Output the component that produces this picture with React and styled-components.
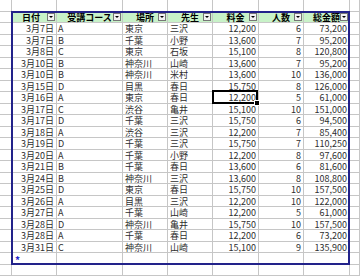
import styled, { createGlobalStyle } from "styled-components";

const GlobalStyle = createGlobalStyle`
  html, body {
    margin: 0;
    padding: 0;
    background: #ffffff;
  }
  body {
    font-family: "Noto Sans CJK JP", "Noto Sans", sans-serif;
  }
`;

const GRID = "#c6c6c6";
const WIDTHS = [12, 45, 66, 45, 45, 46, 45, 46];

const Sheet = styled.div`
  position: relative;
  width: 360px;
  height: 276px;
  overflow: hidden;
  display: grid;
  grid-template-columns: ${WIDTHS.map((w) => w + "px").join(" ")} 1fr;
  grid-template-rows: 12px repeat(11, 11px 12px) 1fr;
  background: #ffffff;
`;

const Cell = styled.div`
  position: relative;
  box-sizing: border-box;
  border-right: 1px solid ${GRID};
  border-bottom: 1px solid ${GRID};
  display: flex;
  align-items: center;
  justify-content: ${(p) => (p.$align === "right" ? "flex-end" : "flex-start")};
  padding: 0 ${(p) => (p.$align === "right" ? "2px" : "0")} 0 ${(p) => p.$pad || 0}px;
  font-size: 9px;
  line-height: 1;
  color: #2e2e2e;
  white-space: nowrap;
  overflow: visible;

  ${(p) =>
    p.$active &&
    `
    &::before {
      content: "";
      position: absolute;
      top: -2px;
      left: -1px;
      right: 0;
      bottom: -1px;
      border: 2px solid #000;
      z-index: 3;
    }
    &::after {
      content: "";
      position: absolute;
      right: -2px;
      bottom: -3px;
      width: 4px;
      height: 4px;
      background: #000;
      border: 1px solid #fff;
      z-index: 4;
    }
  `}
`;

const HeadCell = styled(Cell)`
  background: #c8f2c8;
  justify-content: center;
  font-weight: bold;
  color: #000;
  padding: 0 ${(p) => p.$shift || 0}px 0 0;
`;

const DropButton = styled.span`
  position: absolute;
  right: 1px;
  top: 1px;
  width: 8px;
  height: 8px;
  box-sizing: border-box;
  background: #f2f2f2;
  border: 1px solid #767676;
  display: flex;
  align-items: center;
  justify-content: center;

  &::after {
    content: "";
    border-left: 2px solid transparent;
    border-right: 2px solid transparent;
    border-top: 2px solid #000;
  }
`;

const NewMark = styled.span`
  color: #2222cc;
  font-size: 10px;
  font-weight: bold;
  margin-top: 2px;
`;

const ListFrame = styled.div`
  position: absolute;
  grid-row: 2 / 24;
  grid-column: 2 / 9;
  top: -1px;
  left: -1px;
  right: 0;
  bottom: 0;
  border: 2px solid #22228a;
  pointer-events: none;
  z-index: 2;
`;

const headers = [
  { label: "日付", shift: 6 },
  { label: "受講コース", shift: 0 },
  { label: "場所", shift: 0 },
  { label: "先生", shift: 0 },
  { label: "料金", shift: 0 },
  { label: "人数", shift: 0 },
  { label: "総金額", shift: 0 },
];

const rows = [
  ["3月7日", "A", "東京", "三沢", "12,200", "6", "73,200"],
  ["3月7日", "B", "千葉", "小野", "13,600", "7", "95,200"],
  ["3月8日", "C", "東京", "石坂", "15,100", "8", "120,800"],
  ["3月10日", "B", "神奈川", "山崎", "13,600", "7", "95,200"],
  ["3月10日", "B", "神奈川", "米村", "13,600", "10", "136,000"],
  ["3月15日", "D", "目黒", "春日", "15,750", "8", "126,000"],
  ["3月16日", "A", "東京", "春日", "12,200", "5", "61,000"],
  ["3月17日", "C", "渋谷", "亀井", "15,100", "10", "151,000"],
  ["3月17日", "D", "千葉", "三沢", "15,750", "6", "94,500"],
  ["3月18日", "A", "渋谷", "三沢", "12,200", "7", "85,400"],
  ["3月19日", "D", "千葉", "三沢", "15,750", "7", "110,250"],
  ["3月20日", "A", "千葉", "小野", "12,200", "8", "97,600"],
  ["3月21日", "B", "千葉", "春日", "13,600", "6", "81,600"],
  ["3月24日", "B", "神奈川", "三沢", "13,600", "8", "108,800"],
  ["3月25日", "D", "東京", "春日", "15,750", "10", "157,500"],
  ["3月26日", "A", "目黒", "三沢", "12,200", "10", "122,000"],
  ["3月27日", "A", "千葉", "山崎", "12,200", "5", "61,000"],
  ["3月28日", "D", "神奈川", "亀井", "15,750", "10", "157,500"],
  ["3月28日", "A", "千葉", "春日", "12,200", "6", "73,200"],
  ["3月31日", "C", "神奈川", "山崎", "15,100", "9", "135,900"],
];

// column alignment and left padding for data cells
const colFormat = [
  { align: "right" },
  { pad: 1 },
  { pad: 2 },
  { pad: 2 },
  { align: "right" },
  { align: "right" },
  { align: "right" },
];

const ACTIVE = { row: 6, col: 4 };

function StubRow({ id }) {
  return (
    <>
      {Array.from({ length: 9 }).map((_, i) => (
        <Cell key={id + i} />
      ))}
    </>
  );
}

export default function App() {
  return (
    <>
      <GlobalStyle />
      <Sheet>
        <StubRow id="top" />

        <Cell />
        {headers.map((h) => (
          <HeadCell key={h.label} $shift={h.shift}>
            {h.label}
            <DropButton />
          </HeadCell>
        ))}
        <Cell />

        {rows.map((r, ri) => (
          <>
            <Cell key={"l" + ri} />
            {r.map((v, ci) => (
              <Cell
                key={ri + "-" + ci}
                $align={colFormat[ci].align}
                $pad={colFormat[ci].pad}
                $active={ri === ACTIVE.row && ci === ACTIVE.col}
              >
                {v}
              </Cell>
            ))}
            <Cell key={"r" + ri} />
          </>
        ))}

        <Cell />
        <Cell $pad={3}>
          <NewMark>*</NewMark>
        </Cell>
        {Array.from({ length: 6 }).map((_, i) => (
          <Cell key={"n" + i} />
        ))}
        <Cell />

        <StubRow id="bottom" />

        <ListFrame />
      </Sheet>
    </>
  );
}
